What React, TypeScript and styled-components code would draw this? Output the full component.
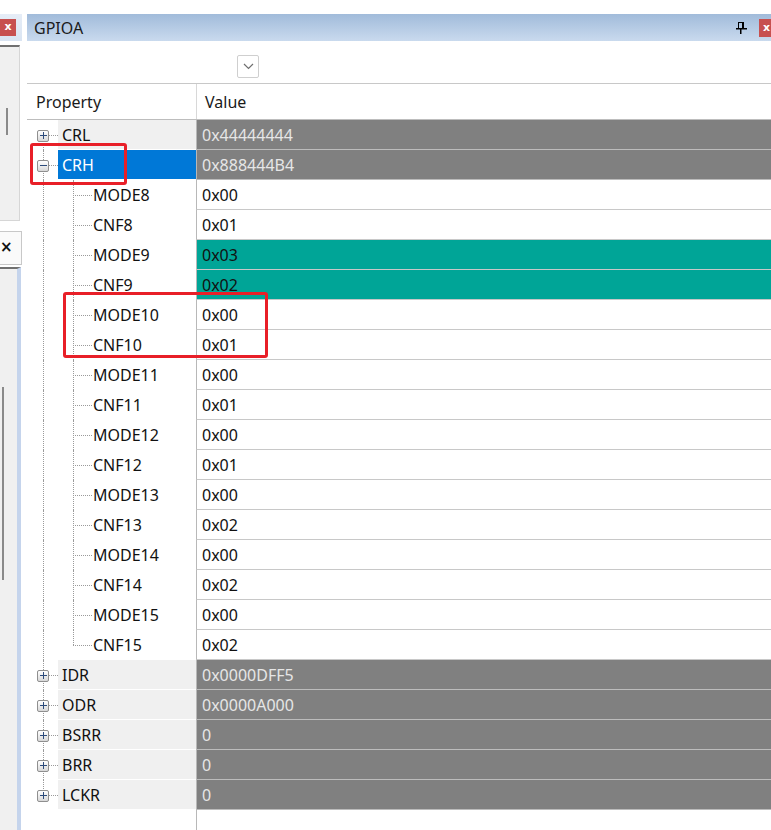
import React from "react";
import styled, { createGlobalStyle, css } from "styled-components";

const GlobalStyle = createGlobalStyle`
  html, body {
    margin: 0;
    padding: 0;
    background: #ffffff;
  }
  body {
    font-family: "Noto Sans", "Open Sans", sans-serif;
    color: #111111;
  }
`;

type Tone = "plain" | "dark" | "teal";

type Field = { name: string; value: string; tone?: Tone };
type Register = {
  name: string;
  value: string;
  open?: boolean;
  selected?: boolean;
  fields?: Field[];
};

const registers: Register[] = [
  { name: "CRL", value: "0x44444444" },
  {
    name: "CRH",
    value: "0x888444B4",
    open: true,
    selected: true,
    fields: [
      { name: "MODE8", value: "0x00" },
      { name: "CNF8", value: "0x01" },
      { name: "MODE9", value: "0x03", tone: "teal" },
      { name: "CNF9", value: "0x02", tone: "teal" },
      { name: "MODE10", value: "0x00" },
      { name: "CNF10", value: "0x01" },
      { name: "MODE11", value: "0x00" },
      { name: "CNF11", value: "0x01" },
      { name: "MODE12", value: "0x00" },
      { name: "CNF12", value: "0x01" },
      { name: "MODE13", value: "0x00" },
      { name: "CNF13", value: "0x02" },
      { name: "MODE14", value: "0x00" },
      { name: "CNF14", value: "0x02" },
      { name: "MODE15", value: "0x00" },
      { name: "CNF15", value: "0x02" },
    ],
  },
  { name: "IDR", value: "0x0000DFF5" },
  { name: "ODR", value: "0x0000A000" },
  { name: "BSRR", value: "0" },
  { name: "BRR", value: "0" },
  { name: "LCKR", value: "0" },
];

const Page = styled.div`
  position: relative;
  width: 771px;
  height: 830px;
  box-sizing: border-box;
  padding-top: 14px;
  display: flex;
  overflow: hidden;
`;

/* ---------- left docked strip ---------- */

const LeftStrip = styled.div`
  width: 22px;
  flex: none;
  display: flex;
  flex-direction: column;
`;

const StripHead = styled.div`
  height: 27px;
  background: linear-gradient(#e6edf7, #d9e4f2);
  display: flex;
  align-items: center;
`;

const CloseBox = styled.div`
  width: 16px;
  height: 17px;
  background: #c75050;
  color: #ffffff;
  font-family: "DejaVu Sans", sans-serif;
  font-size: 11px;
  font-weight: bold;
  line-height: 16px;
  text-align: center;
  flex: none;
`;

const StripPanel = styled.div<{ $grow?: boolean }>`
  background: #f0f0f0;
  border-top: 2px solid #707070;
  box-sizing: border-box;
  ${(p) =>
    p.$grow
      ? css`
          flex: 1;
          margin-right: 1px;
          border-right: 4px solid #c5d4ec;
        `
      : css`
          height: 176px;
          margin-top: 4px;
          margin-right: 2px;
          border-right: 1px solid #d6d6d6;
          border-bottom: 1px solid #d6d6d6;
        `}
`;

const Thumb = styled.div<{ $top: number; $height: number; $left: number }>`
  width: 2px;
  height: ${(p) => p.$height}px;
  margin-top: ${(p) => p.$top}px;
  margin-left: ${(p) => p.$left}px;
  background: #8a8a8a;
`;

const StripTab = styled.div`
  height: 32px;
  margin-top: 10px;
  margin-bottom: 2px;
  border: 1px solid #c8c8c8;
  border-left: none;
  background: #fafafa;
  font-family: "DejaVu Sans", sans-serif;
  font-size: 15px;
  font-weight: bold;
  line-height: 30px;
  color: #111;
  overflow: hidden;
`;

/* ---------- main window ---------- */

const Window = styled.div`
  flex: 1;
  margin-left: 5px;
  display: flex;
  flex-direction: column;
  min-width: 0;
`;

const TitleBar = styled.div`
  height: 27px;
  flex: none;
  background: linear-gradient(#a1bbda, #c9daee);
  display: flex;
  align-items: center;
  padding-left: 7px;
  font-size: 16px;
  color: #1a1a1a;
`;

const TitleText = styled.span`
  flex: 1;
`;

const PinIcon = styled.svg`
  width: 11px;
  height: 12px;
  margin-right: 12px;
  flex: none;
`;

const TitleClose = styled.div`
  width: 12px;
  height: 18px;
  background: #c75050;
  color: #fff;
  font-family: "DejaVu Sans", sans-serif;
  font-size: 11px;
  font-weight: bold;
  line-height: 17px;
  padding-left: 4px;
  box-sizing: border-box;
  overflow: hidden;
  flex: none;
`;

const Toolbar = styled.div`
  height: 42px;
  flex: none;
  border-bottom: 1px solid #c8c8c8;
`;

const DropButton = styled.div`
  width: 22px;
  height: 23px;
  margin: 14px 0 0 210px;
  box-sizing: border-box;
  border: 1px solid #cfcfcf;
  border-radius: 2px;
  background: #ffffff;
  display: flex;
  align-items: center;
  justify-content: center;
`;

const Grid = styled.div`
  display: grid;
  grid-template-columns: 169px 1fr;
`;

const HeaderRow = styled(Grid)`
  height: 35px;
  border-bottom: 1px solid #bdbdbd;
  font-size: 16px;
  color: #1a1a1a;
`;

const HeaderCell = styled.div<{ $split?: boolean }>`
  display: flex;
  align-items: center;
  padding-left: ${(p) => (p.$split ? 8 : 9)}px;
  ${(p) => p.$split && "border-left: 1px solid #d8d8d8;"}
`;

const Row = styled(Grid)`
  height: 30px;
  font-size: 16px;
`;

const PropCell = styled.div`
  display: flex;
  align-items: stretch;
`;

const dotted = "1px dotted #9a9a9a";

const Branch = styled.div<{
  $width: number;
  $axis: number;
  $top?: boolean;
  $end?: boolean;
  $elbow?: boolean;
}>`
  position: relative;
  width: ${(p) => p.$width}px;
  flex: none;
  display: flex;
  align-items: center;

  &::before {
    content: "";
    position: absolute;
    left: ${(p) => p.$axis}px;
    top: ${(p) => (p.$top ? "50%" : "0")};
    bottom: ${(p) => (p.$end ? "50%" : "0")};
    border-left: ${dotted};
  }

  ${(p) =>
    p.$elbow &&
    css`
      &::after {
        content: "";
        position: absolute;
        left: ${p.$axis}px;
        right: 0;
        top: 15px;
        border-top: ${dotted};
      }
    `}
`;

const Expander = styled.div`
  position: relative;
  z-index: 1;
  width: 12px;
  height: 12px;
  margin-left: 10px;
  margin-top: 1px;
  box-sizing: border-box;
  border: 1px solid #8f8f8f;
  border-radius: 2px;
  background: linear-gradient(#ffffff, #d8d8d8);
  display: flex;
  align-items: center;
  justify-content: center;
`;

const Label = styled.div<{ $parent?: boolean; $selected?: boolean }>`
  flex: 1;
  height: 29px;
  display: flex;
  align-items: center;
  padding-left: ${(p) => (p.$parent ? 4 : 1)}px;
  background: ${(p) =>
    p.$selected ? "#0078d7" : p.$parent ? "#f0f0f0" : "transparent"};
  color: ${(p) => (p.$selected ? "#ffffff" : "#111111")};
`;

const toneStyles: Record<Tone, ReturnType<typeof css>> = {
  plain: css`
    background: #ffffff;
    color: #111111;
    border-bottom-color: #c8c8c8;
  `,
  dark: css`
    background: #808080;
    color: #e6e6e6;
    border-bottom-color: #bcbcbc;
  `,
  teal: css`
    background: #00a597;
    color: #111111;
    border-bottom-color: #c8c8c8;
  `,
};

const ValueCell = styled.div<{ $tone: Tone }>`
  display: flex;
  align-items: center;
  padding-left: 5px;
  border-left: 1px solid #b8b8b8;
  border-bottom: 1px solid;
  ${(p) => toneStyles[p.$tone]}
`;

const Filler = styled(Grid)`
  flex: 1;
`;

const EmptyValue = styled.div`
  border-left: 1px solid #b8b8b8;
`;

const Highlight = styled.div<{ $x: number; $y: number; $w: number; $h: number }>`
  position: absolute;
  left: ${(p) => p.$x}px;
  top: ${(p) => p.$y}px;
  width: ${(p) => p.$w}px;
  height: ${(p) => p.$h}px;
  box-sizing: border-box;
  border: 3px solid #e81f28;
  border-radius: 3px;
  pointer-events: none;
`;

const PlusMinus = ({ open }: { open?: boolean }) => (
  <svg width="7" height="7" viewBox="0 0 7 7">
    <rect x="0" y="3" width="7" height="1" fill="#2b4a7a" />
    {!open && <rect x="3" y="0" width="1" height="7" fill="#2b4a7a" />}
  </svg>
);

const RegisterRow = ({
  reg,
  first,
  last,
}: {
  reg: Register;
  first: boolean;
  last: boolean;
}) => (
  <Row>
    <PropCell>
      <Branch $width={31} $axis={16} $top={first} $end={last} $elbow>
        <Expander>
          <PlusMinus open={reg.open} />
        </Expander>
      </Branch>
      <Label $parent $selected={reg.selected}>
        {reg.name}
      </Label>
    </PropCell>
    <ValueCell $tone="dark">{reg.value}</ValueCell>
  </Row>
);

const FieldRow = ({ field, last }: { field: Field; last: boolean }) => (
  <Row>
    <PropCell>
      <Branch $width={31} $axis={16} />
      <Branch $width={34} $axis={15} $end={last} $elbow />
      <Label>{field.name}</Label>
    </PropCell>
    <ValueCell $tone={field.tone ?? "plain"}>{field.value}</ValueCell>
  </Row>
);

export default function App() {
  return (
    <>
      <GlobalStyle />
      <Page>
        <LeftStrip>
          <StripHead>
            <CloseBox>x</CloseBox>
          </StripHead>
          <StripPanel>
            <Thumb $top={61} $height={27} $left={6} />
          </StripPanel>
          <StripTab>×</StripTab>
          <StripPanel $grow>
            <Thumb $top={118} $height={193} $left={2} />
          </StripPanel>
        </LeftStrip>

        <Window>
          <TitleBar>
            <TitleText>GPIOA</TitleText>
            <PinIcon viewBox="0 0 11 12">
              <rect x="2.5" y="0.5" width="5" height="6" fill="none" stroke="#000" />
              <rect x="6" y="0" width="2" height="7" fill="#000" />
              <rect x="0" y="6" width="11" height="1.5" fill="#000" />
              <rect x="4" y="7" width="1.5" height="5" fill="#000" />
            </PinIcon>
            <TitleClose>x</TitleClose>
          </TitleBar>

          <Toolbar>
            <DropButton>
              <svg width="11" height="7" viewBox="0 0 11 7">
                <polyline
                  points="1,1 5.5,5.5 10,1"
                  fill="none"
                  stroke="#6f6f6f"
                  strokeWidth="1.2"
                />
              </svg>
            </DropButton>
          </Toolbar>

          <HeaderRow>
            <HeaderCell>Property</HeaderCell>
            <HeaderCell $split>Value</HeaderCell>
          </HeaderRow>

          {registers.map((reg, i) => (
            <React.Fragment key={reg.name}>
              <RegisterRow
                reg={reg}
                first={i === 0}
                last={i === registers.length - 1}
              />
              {reg.open &&
                reg.fields?.map((f, j) => (
                  <FieldRow
                    key={f.name}
                    field={f}
                    last={j === (reg.fields?.length ?? 0) - 1}
                  />
                ))}
            </React.Fragment>
          ))}

          <Filler>
            <div />
            <EmptyValue />
          </Filler>
        </Window>

        <Highlight $x={30} $y={143} $w={97} $h={42} />
        <Highlight $x={63} $y={292} $w={205} $h={66} />
      </Page>
    </>
  );
}
